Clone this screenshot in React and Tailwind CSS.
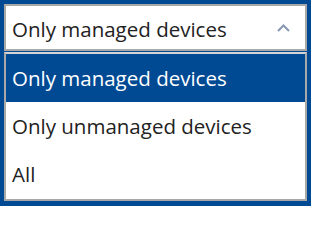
import React from 'react';

const options = ['Only managed devices', 'Only unmanaged devices', 'All'];

const App = () => {
  const selected = 0;

  return (
    <div
      className="w-[311px] h-[206px] overflow-hidden bg-[#004a94] px-1 pt-1 flex flex-col"
      style={{ fontFamily: '"Open Sans", "Noto Sans", sans-serif' }}
    >
      {/* Select box */}
      <div className="h-[47px] shrink-0 bg-white border-2 border-[#a8a8a8] flex items-center justify-between pl-[6px] pr-[15px]">
        <span className="text-[20.5px] text-[#222] leading-none pt-[3px]">Only managed devices</span>
        <svg width="13" height="8" viewBox="0 0 13 8" fill="none">
          <path d="M1 7L6.5 1.5L12 7" stroke="#8797b2" strokeWidth="2" />
        </svg>
      </div>

      {/* Options list */}
      <div className="mt-px shrink-0 bg-white border-2 border-[#a8a8a8] border-t-[#d4d4d4] flex flex-col">
        {options.map((opt, i) => (
          <div
            key={opt}
            className={
              i === selected
                ? 'h-[48px] flex items-center pl-[6px] bg-[#004a94] text-white text-[20.5px]'
                : i === options.length - 1
                  ? 'h-[49px] flex items-center pl-[6px] text-[#222] text-[20.5px]'
                  : 'h-[48px] flex items-center pl-[6px] text-[#222] text-[20.5px]'
            }
          >
            {opt}
          </div>
        ))}
      </div>
    </div>
  );
};

export default App;
